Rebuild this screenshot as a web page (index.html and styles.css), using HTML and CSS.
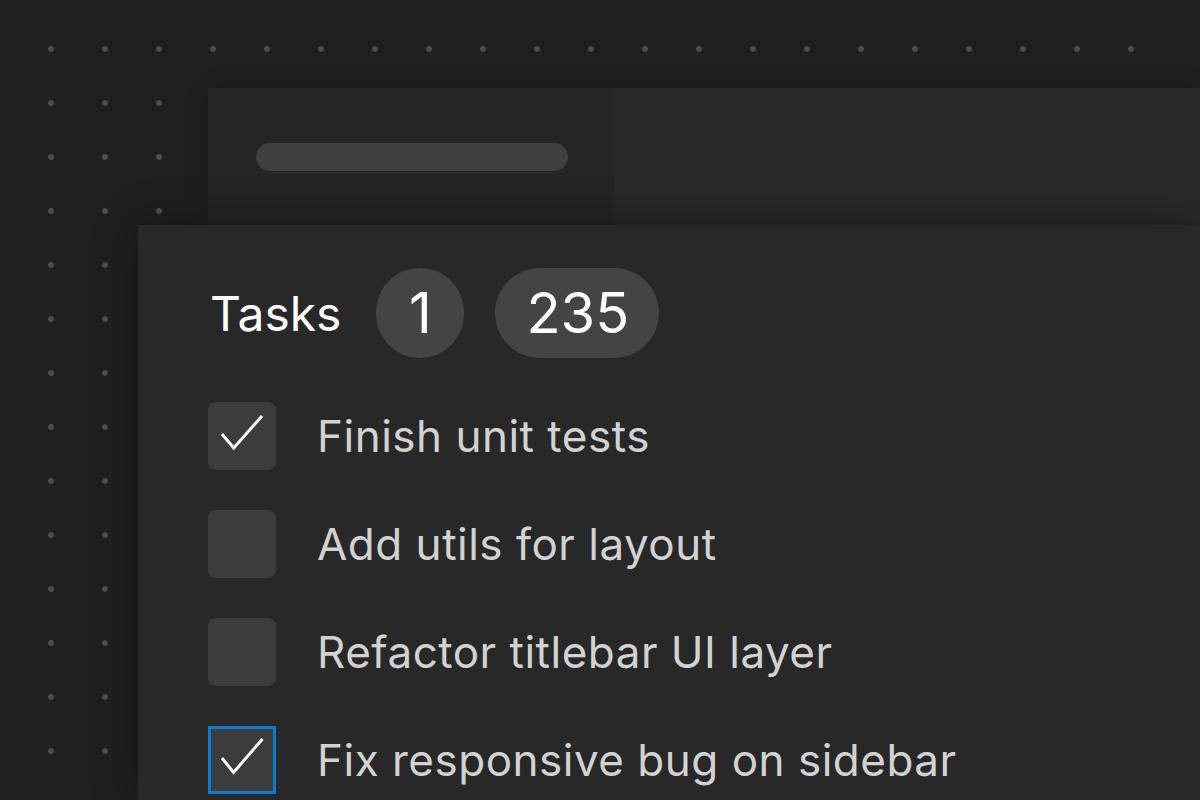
FILE: index.html
```html
<!DOCTYPE html>
<html lang="en">
<head>
<meta charset="utf-8">
<title>Tasks</title>
<link rel="stylesheet" href="styles.css">
</head>
<body>
<div class="stage">
  <div class="back-panel">
    <div class="back-left"><div class="pill"></div></div>
    <div class="back-right"></div>
  </div>
  <div class="main-panel">
    <div class="header">
      <span class="title">Tasks</span>
      <span class="badge badge-round">1</span>
      <span class="badge">235</span>
    </div>
    <ul class="tasks">
      <li class="task">
        <span class="check">
          <svg viewBox="0 0 68 68" width="68" height="68"><polyline points="14,32 25.7,46 54,14" /></svg>
        </span>
        <span class="label">Finish unit tests</span>
      </li>
      <li class="task">
        <span class="check"></span>
        <span class="label">Add utils for layout</span>
      </li>
      <li class="task">
        <span class="check"></span>
        <span class="label">Refactor titlebar UI layer</span>
      </li>
      <li class="task">
        <span class="check check-focus">
          <svg viewBox="0 0 68 68" width="68" height="68"><polyline points="14,32 25.5,46.5 54.5,13" /></svg>
        </span>
        <span class="label">Fix responsive bug on sidebar</span>
      </li>
    </ul>
  </div>
</div>
</body>
</html>
```
FILE: styles.css
```css
html, body {
  margin: 0;
  padding: 0;
}
body {
  width: 1200px;
  height: 800px;
  overflow: hidden;
  font-family: Inter, "Liberation Sans", sans-serif;
  background:
    linear-gradient(to right, transparent 1160px, #1f1f1f 1160px),
    radial-gradient(circle at 27px 27px, #4d4d4d 0, #4d4d4d 2.6px, transparent 3.3px) 24px 22px / 54px 54px,
    #1f1f1f;
}
.stage {
  padding-top: 88px;
  display: flex;
  flex-direction: column;
}
.back-panel {
  margin-left: 208px;
  height: 137px;
  display: flex;
  box-shadow: 0 0 24px rgba(0, 0, 0, 0.12);
}
.back-left {
  width: 407px;
  background: #252525;
  padding: 55px 0 0 48px;
  box-sizing: border-box;
}
.pill {
  width: 312px;
  height: 28px;
  border-radius: 14px;
  background: #404040;
}
.back-right {
  flex: 1;
  background: #292929;
}
.main-panel {
  margin-left: 138px;
  height: 575px;
  background: #282828;
  box-shadow: 0 0 40px rgba(0, 0, 0, 0.35);
  padding: 43px 0 0 70px;
  box-sizing: border-box;
  position: relative;
}
.header {
  display: flex;
  align-items: center;
  height: 90px;
}
.title {
  color: #ffffff;
  font-size: 48px;
  font-weight: 400;
  margin-left: 2px;
  margin-right: 35px;
}
.badge {
  height: 90px;
  padding: 0 30px 0 31px;
  border-radius: 45px;
  background: #444444;
  color: #ffffff;
  font-size: 56px;
  display: flex;
  align-items: center;
  justify-content: center;
  margin-right: 31px;
}
.badge-round {
  width: 88px;
  padding: 0;
}
.tasks {
  list-style: none;
  margin: 44px 0 0 0;
  padding: 0;
  display: flex;
  flex-direction: column;
  gap: 40px;
}
.task {
  display: flex;
  align-items: center;
  height: 68px;
}
.check {
  width: 68px;
  height: 68px;
  border-radius: 8px;
  background: #3c3c3c;
  box-sizing: border-box;
  flex: none;
  display: block;
  position: relative;
}
.check svg {
  display: block;
  position: absolute;
  left: 0;
  top: 0;
}
.check polyline {
  fill: none;
  stroke: #ffffff;
  stroke-width: 3;
  stroke-linecap: butt;
  stroke-linejoin: miter;
}
.check-focus {
  border: 3px solid #0a7bd4;
  border-radius: 0;
}
.check-focus svg {
  left: -3px;
  top: -3px;
}
.label {
  margin-left: 41px;
  color: #d2d2d2;
  font-size: 44px;
  font-weight: 400;
  letter-spacing: 0.5px;
  white-space: nowrap;
}
```
